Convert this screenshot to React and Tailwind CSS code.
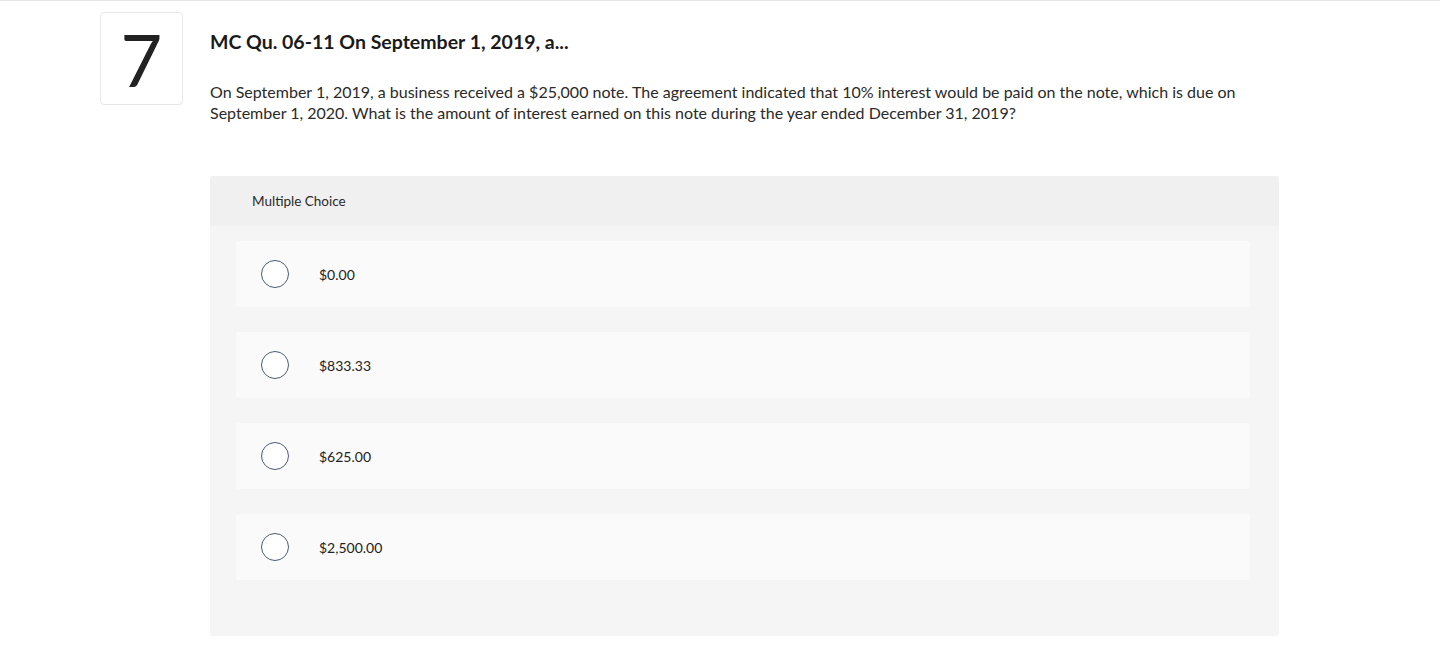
import React from "react";

const options = ["$0.00", "$833.33", "$625.00", "$2,500.00"];

export default function App() {
  return (
    <div className="w-[1440px] h-[655px] bg-white border-t border-[#e6e6e6] text-[#1f1f1f]" style={{ fontFamily: "Lato, 'Noto Sans', sans-serif" }}>
      <div className="flex pl-[100px] pt-[11px]">
        <div className="w-[83px] h-[93px] border border-[#e8e8e8] rounded-[4px] flex items-center justify-center text-[72px] leading-none text-[#222] shrink-0">
          7
        </div>
        <div className="ml-[27px] flex-1">
          <h1 className="mt-[18px] text-[19.5px] font-bold leading-[24px] text-[#1a1a1a]">MC Qu. 06-11 On September 1, 2019, a...</h1>
          <p className="mt-[27px] text-[16px] leading-[21px] text-[#2a2a2a] w-[1060px]">
            On September 1, 2019, a business received a $25,000 note. The agreement indicated that 10% interest would be paid on the note, which is due on September 1, 2020. What is the amount of interest earned on this note during the year ended December 31, 2019?
          </p>
          <div className="mt-[53px] w-[1069px] bg-[#f5f5f5] rounded-[3px]">
            <div className="h-[50px] bg-[#f0f0f0] flex items-center pl-[42px] text-[13.5px] text-[#2a2a2a] rounded-t-[3px]">Multiple Choice</div>
            <div className="pt-[15px] pb-[56px] pl-[26px] flex flex-col gap-[25px]">
              {options.map((o) => (
                <div key={o} className="w-[1014px] h-[66px] bg-[#fafafa] rounded-[2px] flex items-center pl-[25px]">
                  <span className="w-[28px] h-[28px] rounded-full border-[1.5px] border-[#4b5b73] bg-white shrink-0"></span>
                  <span className="ml-[30px] text-[14px] text-[#222]">{o}</span>
                </div>
              ))}
            </div>
          </div>
        </div>
      </div>
    </div>
  );
}
